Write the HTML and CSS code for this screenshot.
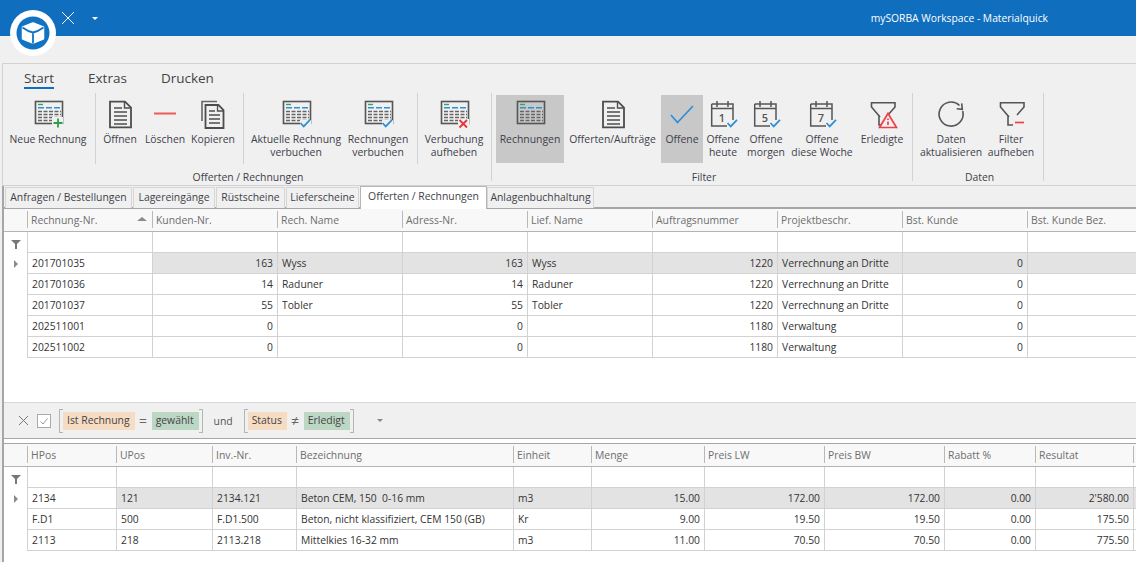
FILE: index.html
```html
<!DOCTYPE html>
<html>

<head>
	<meta charset="utf-8">
	<title>mySORBA Workspace - Materialquick</title>
	<link rel="stylesheet" href="styles.css">
</head>

<body>
	<svg class="defs" width="0" height="0">
		<symbol id="i-table" viewBox="0 0 32 32">
			<rect x="3.5" y="3.5" width="27" height="22" fill="none" stroke="#555" stroke-width="1.6" />
			<path d="M6 6.5h5" stroke="#3aa35a" stroke-width="1.4" />
			<path d="M6 9.8h23" stroke="#2d8fd5" stroke-width="1.4" stroke-dasharray="6 2" />
			<path d="M6 13.5h23M6 16.5h23M6 19.5h23M6 22.5h23" stroke="#666" stroke-width="1.5" stroke-dasharray="4 1.5" />
		</symbol>
		<symbol id="i-check" viewBox="0 0 32 32">
			<path d="M20 22h11v8H20z" fill="#f0f0f0" />
			<path d="M20.5 25l3.2 3.4 6.3-6.6" fill="none" stroke="#2d8fd5" stroke-width="1.7" />
		</symbol>
		<symbol id="i-doc" viewBox="0 0 32 32">
			<path d="M6 3.7h15l6 6V29.3H6z" fill="none" stroke="#4d4d4d" stroke-width="1.8" />
			<path d="M20.5 4v6h6" fill="none" stroke="#4d4d4d" stroke-width="1.4" />
			<path d="M10 10h8M10 14h13M10 18h13M10 22h13M10 26h13" stroke="#4d4d4d" stroke-width="1.5" />
		</symbol>
		<symbol id="i-copy" viewBox="0 0 32 32">
			<path d="M5 23V3.5h15" fill="none" stroke="#666" stroke-width="1.6" />
			<path d="M8.5 7h13l5 5v18H8.5z" fill="none" stroke="#4d4d4d" stroke-width="1.8" />
			<path d="M20.5 7v6h6" fill="none" stroke="#4d4d4d" stroke-width="1.3" />
			<path d="M12 13h6M12 17h11M12 21h11M12 25h11" stroke="#4d4d4d" stroke-width="1.5" />
		</symbol>
		<symbol id="i-cal" viewBox="0 0 32 32">
			<path d="M4.7 6H26V22M21 28H4.7V6M4.7 10.5H26" fill="none" stroke="#555" stroke-width="1.5" />
			<path d="M10 3v6M21 3v6" stroke="#555" stroke-width="1.5" />
		</symbol>
		<symbol id="i-funnel" viewBox="0 0 32 32">
			<path d="M14 19L5.5 9V4.7H29V9L22 17M13 17V27h5" fill="none" stroke="#555" stroke-width="1.6" />
		</symbol>
	</svg>

	<div class="titlebar">
		<svg class="logo" width="46" height="46" viewBox="0 0 46 46">
			<circle cx="23" cy="23" r="23" fill="#fff" />
			<circle cx="23" cy="23" r="16.5" fill="#1273c4" />
			<path d="M23 13.5L33 17.500V28.500L23 32.500 13 28.500V17.500z" fill="#fff" stroke="#fff" stroke-width="2.500" stroke-linejoin="round" />
			<path d="M12.500 17.500Q18 21.500 23 22.500 28 21.500 33.500 17.500M23 22.500V33.500" fill="none" stroke="#1273c4" stroke-width="1.800" />
		</svg>
		<svg class="tb-close" width="14" height="14" viewBox="0 0 14 14">
			<path d="M1 1l12 12M13 1L1 13" stroke="#fff" stroke-width="1" />
		</svg>
		<span class="tb-caret"></span>
		<span class="tb-title">mySORBA Workspace - Materialquick</span>
	</div>

	<div class="ribbon">
		<div class="rb-tabs">
			<span class="rb-tab active">Start</span>
			<span class="rb-tab">Extras</span>
			<span class="rb-tab">Drucken</span>
		</div>
		<div class="rb-body">
			<div class="rb-group g1">
				<div class="rb-row">
					<div class="rb-btn w86">
						<svg class="ico"><use href="#i-table" /><path d="M20 19h11v11H20z" fill="#f0f0f0" /><path d="M26 20.5v9M21.5 25h9" stroke="#2e9e4a" stroke-width="1.8" /></svg>
						<span>Neue Rechnung</span>
					</div>
					<i class="sep"></i>
					<div class="rb-btn w42">
						<svg class="ico"><use href="#i-doc" /></svg>
						<span>Öffnen</span>
					</div>
					<div class="rb-btn w48">
						<svg class="ico"><path d="M5 15.5h22" stroke="#f05a5a" stroke-width="2" /></svg>
						<span>Löschen</span>
					</div>
					<div class="rb-btn w48">
						<svg class="ico"><use href="#i-copy" /></svg>
						<span>Kopieren</span>
					</div>
					<i class="sep wide"></i>
					<div class="rb-btn w98">
						<svg class="ico"><use href="#i-table" /><use href="#i-check" /></svg>
						<span>Aktuelle Rechnung<br>verbuchen</span>
					</div>
					<div class="rb-btn w66">
						<svg class="ico"><use href="#i-table" /><use href="#i-check" /></svg>
						<span>Rechnungen<br>verbuchen</span>
					</div>
					<i class="sep wide"></i>
					<div class="rb-btn w66">
						<svg class="ico"><use href="#i-table" /><path d="M20 21h11v9H20z" fill="#f0f0f0" /><path d="M21.5 22l7.5 7.5M29 22l-7.5 7.5" stroke="#e8353d" stroke-width="1.8" /></svg>
						<span>Verbuchung<br>aufheben</span>
					</div>
				</div>
				<div class="rb-label">Offerten / Rechnungen</div>
			</div>
			<div class="rb-group g2">
				<div class="rb-row">
					<div class="rb-btn w68 on">
						<svg class="ico"><use href="#i-table" /></svg>
						<span>Rechnungen</span>
					</div>
					<div class="rb-btn w97">
						<svg class="ico"><use href="#i-doc" /></svg>
						<span>Offerten/Aufträge</span>
					</div>
					<div class="rb-btn w42 on">
						<svg class="ico"><path d="M5 17l6.5 7.5L27 8" fill="none" stroke="#2d8fd5" stroke-width="1.7" /></svg>
						<span>Offene</span>
					</div>
					<div class="rb-btn w40">
						<svg class="ico"><use href="#i-cal" /><text class="cal-num" x="15" y="23.500">1</text><use href="#i-check" /></svg>
						<span>Offene<br>heute</span>
					</div>
					<div class="rb-btn w46">
						<svg class="ico"><use href="#i-cal" /><text class="cal-num" x="15" y="23.500">5</text><use href="#i-check" /></svg>
						<span>Offene<br>morgen</span>
					</div>
					<div class="rb-btn w66">
						<svg class="ico"><use href="#i-cal" /><text class="cal-num" x="15" y="23.500">7</text><use href="#i-check" /></svg>
						<span>Offene<br>diese Woche</span>
					</div>
					<div class="rb-btn w54">
						<svg class="ico"><use href="#i-funnel" /><path d="M22 15.500L30.500 29.500H13.500z" fill="#f0f0f0" stroke="#ee4049" stroke-width="1.7" /><path d="M22 20.500v1.500M22 23.500v3.500" stroke="#ee4049" stroke-width="1.7" /></svg>
						<span>Erledigte</span>
					</div>
				</div>
				<div class="rb-label">Filter</div>
			</div>
			<div class="rb-group g3">
				<div class="rb-row">
					<div class="rb-btn w70">
						<svg class="ico"><path d="M27.700 13A12 12 0 1 1 24.500 7.500" fill="none" stroke="#555" stroke-width="1.6" /><path d="M26.700 5.300l.6 6-5.600-.6" fill="none" stroke="#555" stroke-width="1.6" /></svg>
						<span>Daten<br>aktualisieren</span>
					</div>
					<div class="rb-btn w50">
						<svg class="ico"><use href="#i-funnel" /><path d="M20 24.500h9" stroke="#ee4049" stroke-width="1.700" /></svg>
						<span>Filter<br>aufheben</span>
					</div>
				</div>
				<div class="rb-label">Daten</div>
			</div>
		</div>
	</div>

	<div class="tabs">
		<div class="tab">Anfragen / Bestellungen</div>
		<div class="tab">Lagereingänge</div>
		<div class="tab">Rüstscheine</div>
		<div class="tab">Lieferscheine</div>
		<div class="tab active">Offerten / Rechnungen</div>
		<div class="tab">Anlagenbuchhaltung</div>
	</div>

	<div class="main">
		<div class="grid-top">
			<table class="grid">
				<colgroup>
					<col class="c23"><col class="c125"><col class="c125"><col class="c125"><col class="c125"><col class="c125"><col class="c125"><col class="c125"><col class="c125"><col class="c125">
				</colgroup>
				<thead>
					<tr class="head">
						<th></th>
						<th><span class="sort"></span>Rechnung-Nr.</th>
						<th>Kunden-Nr.</th>
						<th>Rech. Name</th>
						<th>Adress-Nr.</th>
						<th>Lief. Name</th>
						<th>Auftragsnummer</th>
						<th>Projektbeschr.</th>
						<th>Bst. Kunde</th>
						<th>Bst. Kunde Bez.</th>
					</tr>
					<tr class="filter">
						<td class="ind"><span class="funnel"></span></td>
						<td></td><td></td><td></td><td></td><td></td><td></td><td></td><td></td><td></td>
					</tr>
				</thead>
				<tbody>
					<tr class="sel">
						<td class="ind"><span class="arrow"></span></td>
						<td>201701035</td><td class="n">163</td><td>Wyss</td><td class="n">163</td><td>Wyss</td><td class="n">1220</td><td>Verrechnung an Dritte</td><td class="n">0</td><td></td>
					</tr>
					<tr>
						<td class="ind"></td>
						<td>201701036</td><td class="n">14</td><td>Raduner</td><td class="n">14</td><td>Raduner</td><td class="n">1220</td><td>Verrechnung an Dritte</td><td class="n">0</td><td></td>
					</tr>
					<tr>
						<td class="ind"></td>
						<td>201701037</td><td class="n">55</td><td>Tobler</td><td class="n">55</td><td>Tobler</td><td class="n">1220</td><td>Verrechnung an Dritte</td><td class="n">0</td><td></td>
					</tr>
					<tr>
						<td class="ind"></td>
						<td>202511001</td><td class="n">0</td><td></td><td class="n">0</td><td></td><td class="n">1180</td><td>Verwaltung</td><td class="n">0</td><td></td>
					</tr>
					<tr>
						<td class="ind"></td>
						<td>202511002</td><td class="n">0</td><td></td><td class="n">0</td><td></td><td class="n">1180</td><td>Verwaltung</td><td class="n">0</td><td></td>
					</tr>
				</tbody>
			</table>
		</div>

		<div class="filterbar">
			<svg class="fb-x" width="11" height="11" viewBox="0 0 11 11"><path d="M1 1l9 9M10 1l-9 9" stroke="#777" stroke-width="1" /></svg>
			<svg class="fb-check" width="14" height="14" viewBox="0 0 14 14"><rect x=".5" y=".5" width="13" height="13" fill="#fff" stroke="#aaa" /><path d="M3.500 7.500l2.500 2.500 4.500-5.500" fill="none" stroke="#999" /></svg>
			<div class="fb-clause">
				<span class="chip field">Ist Rechnung</span>
				<span class="op">=</span>
				<span class="chip value">gewählt</span>
			</div>
			<span class="fb-und">und</span>
			<div class="fb-clause">
				<span class="chip field">Status</span>
				<span class="op">≠</span>
				<span class="chip value">Erledigt</span>
			</div>
			<span class="fb-caret"></span>
		</div>

		<div class="grid-bottom">
			<table class="grid">
				<colgroup>
					<col class="c23"><col class="c89"><col class="c96"><col class="c84"><col class="c217"><col class="c78"><col class="c113"><col class="c120"><col class="c120"><col class="c91"><col class="c98"><col class="c10">
				</colgroup>
				<thead>
					<tr class="head">
						<th></th>
						<th>HPos</th>
						<th>UPos</th>
						<th>Inv.-Nr.</th>
						<th>Bezeichnung</th>
						<th>Einheit</th>
						<th>Menge</th>
						<th>Preis LW</th>
						<th>Preis BW</th>
						<th>Rabatt %</th>
						<th>Resultat</th>
						<th></th>
					</tr>
					<tr class="filter">
						<td class="ind"><span class="funnel"></span></td>
						<td></td><td></td><td></td><td></td><td></td><td></td><td></td><td></td><td></td><td></td><td></td>
					</tr>
				</thead>
				<tbody>
					<tr class="sel">
						<td class="ind"><span class="arrow"></span></td>
						<td>2134</td><td>121</td><td>2134.121</td><td>Beton CEM, 150&nbsp; 0-16 mm</td><td>m3</td><td class="n">15.00</td><td class="n">172.00</td><td class="n">172.00</td><td class="n">0.00</td><td class="n">2'580.00</td><td></td>
					</tr>
					<tr>
						<td class="ind"></td>
						<td>F.D1</td><td>500</td><td>F.D1.500</td><td>Beton, nicht klassifiziert, CEM 150 (GB)</td><td>Kr</td><td class="n">9.00</td><td class="n">19.50</td><td class="n">19.50</td><td class="n">0.00</td><td class="n">175.50</td><td></td>
					</tr>
					<tr>
						<td class="ind"></td>
						<td>2113</td><td>218</td><td>2113.218</td><td>Mittelkies 16-32 mm</td><td>m3</td><td class="n">11.00</td><td class="n">70.50</td><td class="n">70.50</td><td class="n">0.00</td><td class="n">775.50</td><td></td>
					</tr>
				</tbody>
			</table>
		</div>
	</div>
</body>

</html>
```

FILE: styles.css
```css
* {
	box-sizing: border-box;
	margin: 0;
	padding: 0;
}

body {
	width: 1136px;
	height: 562px;
	overflow: hidden;
	background: #f0f0f0;
	font-family: "Open Sans", "Noto Sans", sans-serif;
	font-size: 10.4px;
	color: #3f3f4a;
}

.defs {
	position: absolute;
}

/* Title bar */
.titlebar {
	position: relative;
	height: 36px;
	margin-bottom: 27px;
	background: #106ebe;
	display: flex;
	align-items: center;
	padding-left: 61px;
}

.logo {
	position: absolute;
	left: 10px;
	top: 10px;
	z-index: 2;
}

.tb-close {
	margin-right: 17px;
	margin-top: -1px;
}

.tb-caret {
	border-left: 3px solid transparent;
	border-right: 3px solid transparent;
	border-top: 3px solid #fff;
}

.tb-title {
	margin-left: auto;
	margin-right: 88px;
	color: #fff;
	font-size: 10.3px;
}

/* Ribbon */
.ribbon {
	height: 123px;
	margin-left: 2px;
	border-top: 1px solid #d2d2d2;
	border-left: 1px solid #d2d2d2;
	border-bottom: 1px solid #d2d2d2;
}

.rb-tabs {
	display: flex;
	gap: 34px;
	height: 29px;
	padding: 5px 0 0 21px;
}

.rb-tab {
	height: 20px;
	font-size: 13.5px;
	line-height: 18px;
	color: #444;
}

.rb-tab.active {
	border-bottom: 2px solid #106ebe;
}

.rb-body {
	display: flex;
	padding-left: 2px;
}

.rb-group {
	height: 88px;
	border-right: 1px solid #d2d2d2;
}

.g1 {
	width: 487px;
}

.g2 {
	width: 421px;
	padding-left: 4px;
}

.g3 {
	width: 131px;
	padding-left: 3px;
}

.rb-row {
	display: flex;
	height: 71px;
	padding-top: 2px;
}

.sep {
	width: 1px;
	height: 71px;
	margin: -2px 3px 0 4px;
	background: #d2d2d2;
}

.sep.wide {
	margin-left: 6px;
}

.rb-btn {
	height: 68px;
	padding-top: 3px;
	text-align: center;
	line-height: 13px;
	white-space: nowrap;
}

.rb-btn span {
	display: block;
	margin-top: 3px;
}

.rb-btn.on {
	background: #c8c8c8;
}

.ico {
	display: block;
	width: 32px;
	height: 32px;
	margin: 0 auto;
}

.ico use {
	width: 32px;
	height: 32px;
}

.cal-num {
	font-size: 11px;
	font-weight: 600;
	fill: #555;
	text-anchor: middle;
}

.w40 { width: 40px; }
.w42 { width: 42px; }
.w46 { width: 46px; }
.w48 { width: 48px; }
.w50 { width: 50px; }
.w54 { width: 54px; }
.w66 { width: 66px; }
.w68 { width: 68px; }
.w70 { width: 70px; }
.w86 { width: 86px; }
.w97 { width: 97px; }
.w98 { width: 98px; }

.rb-label {
	margin-top: 4px;
	line-height: 18px;
	text-align: center;
}

/* Page tabs */
.tabs {
	display: flex;
	height: 22px;
	margin-left: 5px;
	margin-bottom: -22px;
}

.tab {
	height: 21px;
	margin-top: 1px;
	margin-right: 1px;
	background: #f0f0f0;
	border: 1px solid #d6d6d6;
	border-bottom: none;
	text-align: center;
	line-height: 19px;
	white-space: nowrap;
}

.tab:nth-child(1) { width: 127px; }
.tab:nth-child(2) { width: 82px; }
.tab:nth-child(3) { width: 69px; }
.tab:nth-child(4) { width: 73px; }
.tab:nth-child(6) { width: 107px; margin-right: 0; }

.tab.active {
	position: relative;
	width: 127px;
	height: 23px;
	margin-top: 0;
	margin-right: 0;
	background: #fff;
	border-color: #b5b5b5;
	z-index: 2;
}

/* Grids */
.main {
	height: 376px;
	margin-left: 2px;
	padding-top: 22px;
	background: #fff;
	background-clip: content-box;
	border-left: 2px solid #a6a6a6;
}

.grid-top {
	height: 195px;
	border-top: 2px solid #a6a6a6;
	margin-top: -1px;
	overflow: hidden;
}

.grid-bottom {
	border-top: 1px solid #a6a6a6;
	margin-top: 4px;
	overflow: hidden;
}

.grid {
	table-layout: fixed;
	border-collapse: separate;
	border-spacing: 0;
	width: 1132px;
	color: #333;
	font-size: 10.3px;
}

.c10 { width: 10px; }
.c23 { width: 23px; }
.c78 { width: 78px; }
.c84 { width: 84px; }
.c89 { width: 89px; }
.c91 { width: 91px; }
.c96 { width: 96px; }
.c98 { width: 98px; }
.c113 { width: 113px; }
.c120 { width: 120px; }
.c125 { width: 125px; }
.c217 { width: 217px; }

.grid th {
	position: relative;
	height: 23px;
	padding: 0 4px 1px;
	background: #f8f8f8;
	border-bottom: 1px solid #b4b4b4;
	font-weight: 400;
	font-size: 10.4px;
	text-align: left;
	color: #6e6e6e;
	white-space: nowrap;
}

.grid th + th::before {
	content: "";
	position: absolute;
	left: 0;
	top: 2px;
	bottom: 3px;
	width: 1px;
	background: #b8b8b8;
}

.grid td {
	height: 21px;
	padding: 0 4px;
	border-left: 1px solid #d2d2d2;
	border-bottom: 1px solid #d2d2d2;
	white-space: nowrap;
	overflow: hidden;
}

.grid td.ind {
	padding: 0;
	border-left: none;
	border-bottom: none;
	text-align: center;
}

.grid td.n {
	text-align: right;
}

.sel td:not(.ind):not(:nth-child(2)) {
	background: #e3e3e3;
}

.sort {
	float: right;
	margin: 4px 1px 0 0;
	border-left: 5px solid transparent;
	border-right: 5px solid transparent;
	border-bottom: 4px solid #8a8a8a;
}

.funnel {
	display: inline-block;
	width: 0;
	height: 0;
	border-left: 5px solid transparent;
	border-right: 5px solid transparent;
	border-top: 5px solid #777;
	position: relative;
	top: -2px;
}

.funnel::after {
	content: "";
	position: absolute;
	left: -1px;
	top: -1px;
	width: 2px;
	height: 5px;
	background: #777;
}

.arrow {
	display: inline-block;
	border-top: 4px solid transparent;
	border-bottom: 4px solid transparent;
	border-left: 4px solid #8a8a8a;
}

/* Filter bar */
.filterbar {
	display: flex;
	align-items: center;
	height: 37px;
	padding-left: 14px;
	background: #f0f0f0;
	border-top: 1px solid #d6d6d6;
	border-bottom: 1px solid #a6a6a6;
}

.fb-x {
	margin-right: 8px;
}

.fb-check {
	margin-right: 8px;
}

.fb-clause {
	display: flex;
	align-items: center;
	height: 24px;
	padding: 0 3px;
	gap: 3px;
	border-left: 1px solid #b5b5b5;
	border-right: 1px solid #b5b5b5;
	position: relative;
}

.fb-clause::before,
.fb-clause::after {
	content: "";
	position: absolute;
	top: 0;
	bottom: 0;
	width: 3px;
	border-top: 1px solid #b5b5b5;
	border-bottom: 1px solid #b5b5b5;
}

.fb-clause::before {
	left: 0;
}

.fb-clause::after {
	right: 0;
}

.chip {
	height: 18px;
	padding: 0 5px 0 4px;
	line-height: 17px;
	color: #444;
}

.chip.field {
	background: #f7dcc4;
}

.chip.value {
	background: #bcd7c4;
}

.op {
	width: 11px;
	text-align: center;
	font-size: 14px;
	line-height: 16px;
	color: #666;
}

.fb-und {
	width: 41px;
	text-align: center;
	color: #555;
}

.fb-caret {
	margin-left: 23px;
	border-left: 3px solid transparent;
	border-right: 3px solid transparent;
	border-top: 3px solid #888;
}
```
